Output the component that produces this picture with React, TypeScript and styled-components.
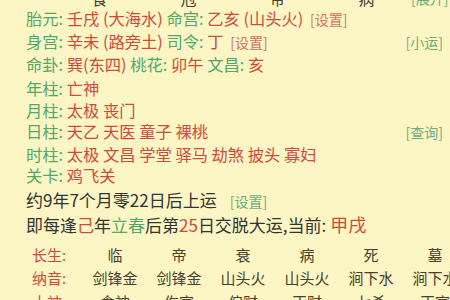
import React from "react";
import styled, { createGlobalStyle } from "styled-components";

const GlobalStyle = createGlobalStyle`
  html, body {
    margin: 0;
    padding: 0;
    width: 450px;
    height: 300px;
    overflow: hidden;
    background: #fcf6c4;
  }
  body {
    font-family: "Noto Sans CJK SC", "Noto Sans", sans-serif;
  }
`;

const green = "#4fa86c";
const red = "#cf4a3e";
const linkRed = "#d3705f";
const linkGreen = "#6aad82";
const dark = "#473e2f";

const Page = styled.div`
  width: 450px;
  height: 300px;
  overflow: hidden;
  background: #fcf6c4;
  padding: 0 7px 0 26px;
  box-sizing: border-box;
`;

const HeaderRow = styled.div`
  display: grid;
  grid-template-columns: 29px repeat(4, 89px) 1fr;
  height: 7px;
  line-height: 18px;
  margin-top: 0;
  font-size: 16px;
  color: ${dark};
  white-space: nowrap;
`;

const HeadCell = styled.span`
  text-align: center;
  margin-top: -11px;
`;

const HeadLink = styled.span`
  justify-self: end;
  margin-top: -11px;
  color: ${linkGreen};
  font-size: 14px;
`;

const Section = styled.div<{ $gap?: number; $line: number }>`
  margin-top: ${(p) => p.$gap ?? 0}px;
  line-height: ${(p) => p.$line}px;
`;

const Line = styled.div`
  display: flex;
  align-items: baseline;
  font-size: 16.3px;
  white-space: nowrap;
`;

const Label = styled.span`
  color: ${green};
`;

const Value = styled.span`
  color: ${red};
`;

const Link = styled.span<{ $tone?: "red" | "green" }>`
  color: ${(p) => (p.$tone === "green" ? linkGreen : linkRed)};
  font-size: 14px;
  margin-left: 3px;
`;

const RightLink = styled(Link)`
  margin-left: auto;
`;

const YunLine = styled.div`
  font-size: 17px;
  color: #333;
  white-space: nowrap;
`;

const YunLink = styled(Link)`
  margin-left: 13px;
`;

const Mark = styled.span<{ $tone: "red" | "green" }>`
  color: ${(p) => (p.$tone === "green" ? green : red)};
`;

const Current = styled.span`
  color: ${red};
  font-size: 18px;
`;

const Table = styled.div`
  margin-top: 7px;
`;

const TableRow = styled.div`
  display: grid;
  grid-template-columns: 57px repeat(6, 64px);
  line-height: 23.5px;
  font-size: 15px;
  white-space: nowrap;
`;

const RowLabel = styled.span`
  color: ${red};
  padding-left: 6px;
`;

const Cell = styled.span`
  color: ${dark};
  text-align: center;
`;

const tableRows = [
  { label: "长生:", values: ["临", "帝", "衰", "病", "死", "墓"] },
  { label: "纳音:", values: ["剑锋金", "剑锋金", "山头火", "山头火", "涧下水", "涧下水"] },
  { label: "十神:", values: ["食神", "伤官", "偏财", "正财", "七杀", "正官"] },
];

const shensha = [
  { label: "年柱:", items: "亡神" },
  { label: "月柱:", items: "太极 丧门" },
  { label: "日柱:", items: "天乙 天医 童子 裸桃", link: "[查询]" },
  { label: "时柱:", items: "太极 文昌 学堂 驿马 劫煞 披头 寡妇" },
  { label: "关卡:", items: "鸡飞关" },
];

export default function App() {
  return (
    <>
      <GlobalStyle />
      <Page>
        <HeaderRow>
          <span />
          <HeadCell>食</HeadCell>
          <HeadCell>冠</HeadCell>
          <HeadCell>帝</HeadCell>
          <HeadCell>病</HeadCell>
          <HeadLink>[展开]</HeadLink>
        </HeaderRow>

        <Section $line={22}>
          <Line>
            <Label>胎元:</Label>&nbsp;<Value>壬戌 (大海水)</Value>&nbsp;
            <Label>命宫:</Label>&nbsp;<Value>乙亥 (山头火)</Value>&nbsp;
            <Link>[设置]</Link>
          </Line>
          <Line>
            <Label>身宫:</Label>&nbsp;<Value>辛未 (路旁土)</Value>&nbsp;
            <Label>司令:</Label>&nbsp;<Value>丁</Value>&nbsp;
            <Link>[设置]</Link>
            <RightLink $tone="green">[小运]</RightLink>
          </Line>
          <Line>
            <Label>命卦:</Label>&nbsp;<Value>巽(东四)</Value>&nbsp;
            <Label>桃花:</Label>&nbsp;<Value>卯午</Value>&nbsp;
            <Label>文昌:</Label>&nbsp;<Value>亥</Value>
          </Line>
        </Section>

        <Section $gap={3} $line={21.5}>
          {shensha.map((row) => (
            <Line key={row.label}>
              <Label>{row.label}</Label>&nbsp;<Value>{row.items}</Value>
              {row.link && <RightLink $tone="green">{row.link}</RightLink>}
            </Line>
          ))}
        </Section>

        <Section $gap={1} $line={23}>
          <YunLine>
            约9年7个月零22日后上运<YunLink $tone="green">[设置]</YunLink>
          </YunLine>
          <YunLine>
            即每逢<Mark $tone="red">己</Mark>年<Mark $tone="green">立春</Mark>后第
            <Mark $tone="red">25</Mark>日交脱大运,当前: <Current>甲戌</Current>
          </YunLine>
        </Section>

        <Table>
          {tableRows.map((row) => (
            <TableRow key={row.label}>
              <RowLabel>{row.label}</RowLabel>
              {row.values.map((v, i) => (
                <Cell key={i}>{v}</Cell>
              ))}
            </TableRow>
          ))}
        </Table>
      </Page>
    </>
  );
}
